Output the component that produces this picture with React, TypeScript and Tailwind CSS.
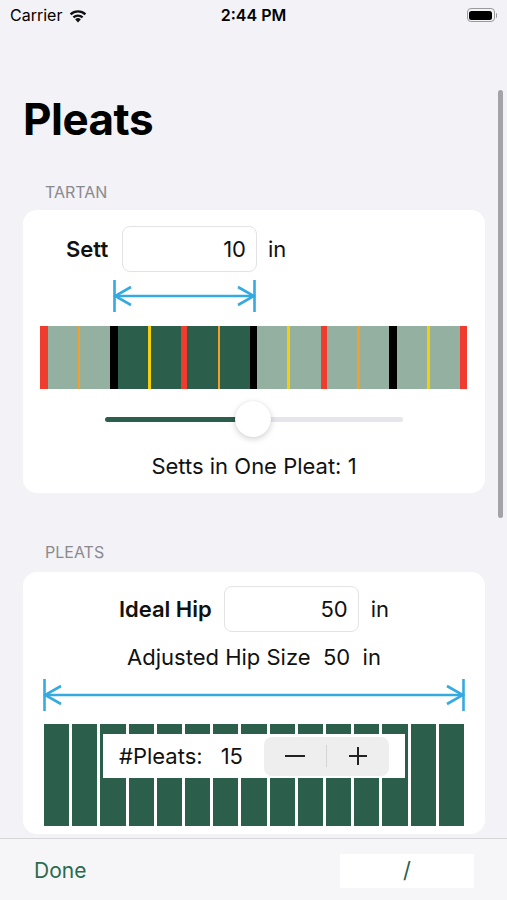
const font = { fontFamily: '"Inter", "Liberation Sans", sans-serif' };

// tartan stripes: [width px, colour]
const sett: [number, string][] = [
  [8, '#f03b2f'], [30, '#94b0a1'], [2, '#f0a02c'], [30, '#94b0a1'], [8, '#000000'],
  [30, '#2c5f4b'], [3, '#f5cf0c'], [30, '#2c5f4b'], [6, '#f03b2f'], [31, '#2c5f4b'],
  [2, '#f0a02c'], [30, '#2c5f4b'], [7, '#000000'], [30, '#94b0a1'], [3, '#f5cf0c'],
  [31, '#94b0a1'], [6, '#f03b2f'], [30, '#94b0a1'], [3, '#f0a02c'], [29, '#94b0a1'],
  [8, '#000000'], [30, '#94b0a1'], [3, '#f5cf0c'], [30, '#94b0a1'], [7, '#f03b2f'],
];

function WidthArrow({ width }: { width: number }) {
  return (
    <svg width={width} height={32} viewBox={`0 0 ${width} 32`} fill="none" stroke="#34aae0" strokeWidth={2.6}>
      <line x1={1.5} y1={0} x2={1.5} y2={32} />
      <line x1={width - 1.5} y1={0} x2={width - 1.5} y2={32} />
      <line x1={2} y1={16} x2={width - 2} y2={16} />
      <polyline points={`18,7 2,16 18,25`} />
      <polyline points={`${width - 18},7 ${width - 2},16 ${width - 18},25`} />
    </svg>
  );
}

function StatusBar() {
  return (
    <div className="flex h-[30px] items-center justify-between pl-[10px] pr-[10px] text-[16px] text-black">
      <div className="flex w-[120px] items-center gap-[6px]">
        <span>Carrier</span>
        <svg width="20" height="15" viewBox="0 0 20 15" fill="#111">
          <path d="M10 14.5 L7.2 11.4 A4 4 0 0 1 12.8 11.4 Z" />
          <path d="M4.6 8.6 A7.8 7.8 0 0 1 15.4 8.6 L13.8 10.3 A5.5 5.5 0 0 0 6.2 10.3 Z" />
          <path d="M1.8 5.6 A11.8 11.8 0 0 1 18.2 5.6 L16.6 7.3 A9.4 9.4 0 0 0 3.4 7.3 Z" />
        </svg>
      </div>
      <span className="font-semibold">2:44 PM</span>
      <div className="flex w-[120px] justify-end">
        <div className="flex items-center">
          <div className="h-[14px] w-[28px] rounded-[4px] border border-[#9a9a9a] p-[1.5px]">
            <div className="h-full w-full rounded-[2.5px] bg-black" />
          </div>
          <div className="ml-[1px] h-[5px] w-[1.5px] rounded-r bg-[#9a9a9a]" />
        </div>
      </div>
    </div>
  );
}

export default function App() {
  return (
    <div className="relative flex h-[900px] w-[507px] flex-col overflow-hidden bg-[#f2f2f7]" style={font}>
      <StatusBar />
      <div className="flex-1 overflow-hidden">
        <h1 className="ml-[23px] mt-[67px] text-[44px] font-bold leading-[44px] tracking-[-0.5px] text-black">Pleats</h1>

        <p className="ml-[45px] mt-[41px] text-[16px] leading-[20px] text-[#8a8a8e]">TARTAN</p>
        <section className="ml-[23px] mt-[8px] w-[462px] rounded-[14px] bg-white pb-[13px] pt-[16px]">
          <div className="flex items-center text-[22px] text-[#111]">
            <span className="ml-[43px] w-[44px] font-semibold">Sett</span>
            <div className="ml-[12px] flex h-[46px] w-[135px] items-center justify-end rounded-[8px] border border-[#e3e3e6] pr-[10px]">
              10
            </div>
            <span className="ml-[11px]">in</span>
          </div>
          <div className="ml-[90px] mt-[8px]">
            <WidthArrow width={143} />
          </div>
          <div className="ml-[17px] mt-[14px] flex h-[63px] w-[427px]">
            {sett.map(([w, c], i) => (
              <div key={i} className="h-full" style={{ width: w, backgroundColor: c }} />
            ))}
          </div>
          <div className="relative ml-[82px] mt-[12px] flex h-[36px] w-[298px] items-center">
            <div className="h-[5px] w-[148px] rounded-l-full bg-[#2c5f4b]" />
            <div className="h-[5px] flex-1 rounded-r-full bg-[#e5e5ea]" />
            <div className="absolute left-[130px] top-0 h-[36px] w-[36px] rounded-full bg-white shadow-[0_2px_6px_rgba(0,0,0,0.18),0_0_1px_rgba(0,0,0,0.1)]" />
          </div>
          <p className="mt-[15px] text-center text-[22px] leading-[28px] text-[#111]">Setts in One Pleat: 1</p>
        </section>

        <p className="ml-[45px] mt-[49px] text-[16px] leading-[20px] text-[#8a8a8e]">PLEATS</p>
        <section className="ml-[23px] mt-[10px] w-[462px] rounded-[14px] bg-white pb-[8px] pt-[14px]">
          <div className="flex items-center justify-center text-[22px] text-[#111]">
            <span className="font-semibold">Ideal Hip</span>
            <div className="ml-[12px] flex h-[46px] w-[135px] items-center justify-end rounded-[8px] border border-[#e3e3e6] pr-[10px]">
              50
            </div>
            <span className="ml-[12px]">in</span>
          </div>
          <p className="mt-[11px] text-center text-[22px] leading-[28px] text-[#111]">Adjusted Hip Size&nbsp; 50&nbsp; in</p>
          <div className="ml-[20px] mt-[8px]">
            <WidthArrow width={422} />
          </div>
          <div className="relative ml-[21px] mt-[13px] flex h-[102px] w-[420px] gap-[3px]">
            {Array.from({ length: 15 }).map((_, i) => (
              <div key={i} className="h-full flex-1 bg-[#2c5f4b]" />
            ))}
            <div className="absolute left-[59px] top-[10px] flex h-[44px] w-[302px] items-center bg-white text-[22px] text-[#111]">
              <span className="ml-[16px]">#Pleats:</span>
              <span className="ml-[18px]">15</span>
              <div className="ml-[21px] flex h-[39px] w-[125px] items-center rounded-[8px] bg-[#eeeeef]">
                <div className="flex flex-1 items-center justify-center">
                  <div className="h-[2px] w-[20px] bg-[#222]" />
                </div>
                <div className="h-[22px] w-px bg-[#d4d4d8]" />
                <div className="flex flex-1 items-center justify-center">
                  <svg width="20" height="20" viewBox="0 0 20 20" stroke="#222" strokeWidth="2">
                    <line x1="1" y1="10" x2="19" y2="10" />
                    <line x1="10" y1="1" x2="10" y2="19" />
                  </svg>
                </div>
              </div>
            </div>
          </div>
        </section>
      </div>

      <footer className="flex h-[62px] items-center justify-between border-t border-[#d6d6d9] bg-[#f6f6f8] pl-[34px] pr-[33px] pt-[2px]">
        <span className="text-[21px] text-[#2c6a4e]">Done</span>
        <div className="flex h-[34px] w-[134px] items-center justify-center bg-white text-[22px] text-[#2c5f4b]">/</div>
      </footer>

      <div className="absolute left-[498px] top-[90px] h-[428px] w-[5px] rounded-full bg-[#a4a4a8]" />
    </div>
  );
}
